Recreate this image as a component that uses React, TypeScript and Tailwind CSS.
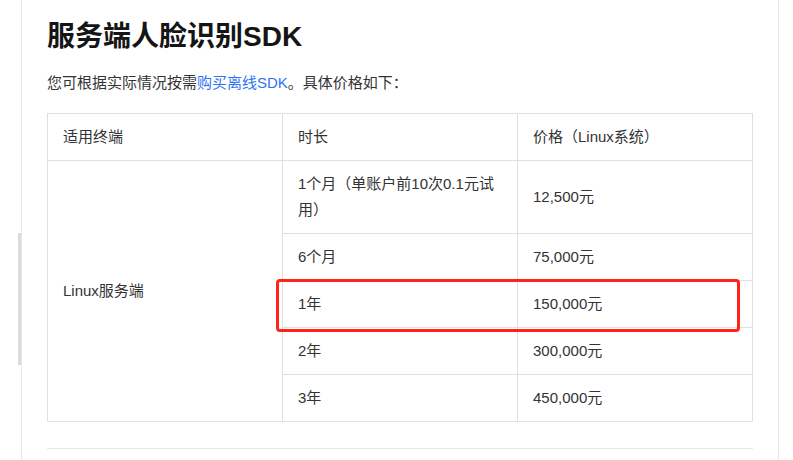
const font = '"Liberation Sans", "Noto Sans CJK SC", sans-serif';

const rows = [
  { term: "1个月（单账户前10次0.1元试用）", price: "12,500元" },
  { term: "6个月", price: "75,000元" },
  { term: "1年", price: "150,000元" },
  { term: "2年", price: "300,000元" },
  { term: "3年", price: "450,000元" },
];

const cell = "border border-[#e0e0e0] px-[15px] py-[10px] text-left align-middle font-normal leading-[26px]";

const App = () => {
  return (
    <div className="relative h-[460px] w-[793px] overflow-hidden bg-white text-[#333]" style={{ fontFamily: font }}>
      {/* scrollbar thumb on the left edge */}
      <div className="absolute left-[18px] top-[233px] h-[132px] w-[3px] bg-[#dcdcdc]" />

      <div className="ml-[21px] h-full w-[758px] border-x border-[#e8e8e8] px-[25px] pt-[17px]">
        <h1 className="text-[28px] font-bold leading-[40px] text-[#151515]">服务端人脸识别SDK</h1>
        <p className="mt-[13px] text-[15px] leading-[25px]">
          您可根据实际情况按需<span className="text-[#2f74f5]">购买离线SDK</span>。具体价格如下：
        </p>

        <div className="relative mt-[18px]">
          <table className="w-full table-fixed border-collapse text-[15px]">
            <thead>
              <tr>
                <th className={cell}>适用终端</th>
                <th className={cell}>时长</th>
                <th className={cell}>价格（Linux系统）</th>
              </tr>
            </thead>
            <tbody>
              {rows.map((r, i) => (
                <tr key={r.term}>
                  {i === 0 && (
                    <td rowSpan={rows.length} className={cell}>
                      Linux服务端
                    </td>
                  )}
                  <td className={cell}>{r.term}</td>
                  <td className={cell}>{r.price}</td>
                </tr>
              ))}
            </tbody>
          </table>

          {/* red highlight annotation around the 1年 row */}
          <div className="pointer-events-none absolute left-[229px] top-[166px] h-[53px] w-[464px] rounded-[4px] border-[3px] border-[#ff2417]" />
        </div>

        <div className="mt-[26px] border-t border-[#e8e8e8]" />
      </div>
    </div>
  );
};

export default App;
